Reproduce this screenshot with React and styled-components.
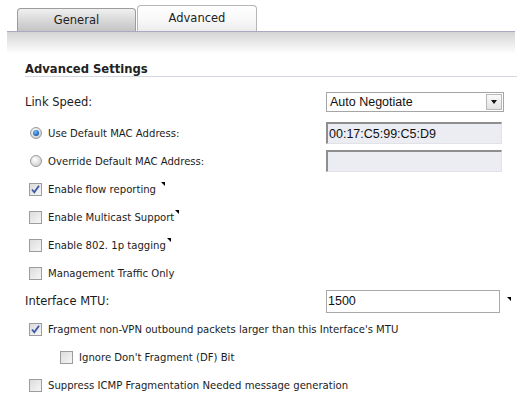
import React from "react";
import styled, { createGlobalStyle, css } from "styled-components";

const Global = createGlobalStyle`
  html, body {
    margin: 0;
    background: #fff;
    font-family: "DejaVu Sans", Verdana, sans-serif;
    color: #1c1c1c;
  }
`;

const TabStrip = styled.div`
  display: flex;
  align-items: flex-end;
  height: 31px;
  margin: 0 5px 0 7px;
  padding-left: 10px;
  border-bottom: 1px solid #a9a9c1;
`;

const Tab = styled.div`
  box-sizing: border-box;
  width: ${(p) => (p.active ? 120 : 119)}px;
  height: ${(p) => (p.active ? 26 : 23)}px;
  margin-right: 1px;
  border: 1px solid ${(p) => (p.active ? "#b6b6b6" : "#9c9c9c")};
  border-bottom: none;
  border-radius: 4px 4px 0 0;
  display: flex;
  align-items: center;
  justify-content: center;
  font-size: 11.5px;
  color: #222;
  padding-bottom: ${(p) => (p.active ? 2 : 0)}px;
  background: ${(p) =>
    p.active
      ? "linear-gradient(#ffffff, #f7f7f7 60%, #ececec)"
      : "linear-gradient(#f0f0f0, #d9d9d9 50%, #c4c4c4)"};
`;

const Band = styled.div`
  height: 22px;
  margin: 0 5px 0 7px;
  background: linear-gradient(#d5d5d5, #ececec 55%, #ffffff);
`;

const Title = styled.div`
  margin: 0 3px 0 25px;
  padding-top: 8px;
  line-height: 14px;
  font-size: 11.6px;
  font-weight: bold;
  color: #222;
  border-bottom: 1px solid #d3d7e3;
`;

const Form = styled.div`
  padding-top: 11px;
`;

const Row = styled.div`
  display: grid;
  grid-template-columns: 301px 1fr;
  align-items: center;
  height: 28px;
  padding-left: ${(p) => p.indent}px;
  margin-bottom: ${(p) => p.gap || 0}px;
`;

const Option = styled.div`
  display: flex;
  align-items: center;
  height: 28px;
  padding-left: ${(p) => p.indent}px;
`;

const FieldLabel = styled.span`
  font-size: 11.5px;
  color: #1c1c1c;
`;

const Text = styled.span`
  font-size: 10.1px;
  color: #1c1c1c;
  margin-left: ${(p) => p.gap}px;
`;

const Flag = styled.span`
  display: inline-block;
  align-self: flex-start;
  margin: 7px 0 0 ${(p) => p.gap}px;
  width: 0;
  height: 0;
  border-top: 4px solid #000;
  border-left: 4px solid transparent;
`;

const Radio = styled.span`
  box-sizing: border-box;
  width: 12px;
  height: 12px;
  border-radius: 50%;
  border: 1px solid #9a9a9a;
  background: radial-gradient(circle at 40% 35%, #ffffff, #d2d2d2 75%);
  display: flex;
  align-items: center;
  justify-content: center;
  ${(p) =>
    p.checked &&
    css`
      &::after {
        content: "";
        width: 6px;
        height: 6px;
        border-radius: 50%;
        background: radial-gradient(circle at 40% 35%, #6fc0ff, #1c5fb4 70%, #0d3c86);
      }
    `}
`;

const Box = styled.span`
  box-sizing: border-box;
  width: 13px;
  height: 13px;
  border: 1px solid #9c9c9c;
  background: linear-gradient(135deg, #dcdcdc, #f6f6f6);
  display: flex;
  align-items: center;
  justify-content: center;
`;

const Select = styled.div`
  box-sizing: border-box;
  width: 178px;
  height: 20px;
  border: 1px solid #a5a5a5;
  display: flex;
  align-items: center;
  justify-content: space-between;
  padding: 0 1px 0 3px;
  font-family: "Liberation Sans", Arial, sans-serif;
  font-size: 12.5px;
  color: #111;
`;

const ArrowBtn = styled.span`
  box-sizing: border-box;
  width: 16px;
  height: 16px;
  border: 1px solid #b8b8b8;
  background: linear-gradient(#fafafa, #e2e2e2);
  display: flex;
  align-items: center;
  justify-content: center;
  &::after {
    content: "";
    border-top: 4px solid #111;
    border-left: 3.5px solid transparent;
    border-right: 3.5px solid transparent;
  }
`;

const Input = styled.div`
  box-sizing: border-box;
  width: ${(p) => p.width}px;
  height: ${(p) => p.height}px;
  display: flex;
  align-items: center;
  padding-left: 1px;
  font-family: "Liberation Sans", Arial, sans-serif;
  font-size: 12.5px;
  color: #111;
  ${(p) =>
    p.sunken
      ? css`
          background: #ecedf3;
          border-top: 2px solid #8e8e8e;
          border-left: 2px solid #8e8e8e;
          border-right: 1px solid #e2e2e6;
          border-bottom: 1px solid #e2e2e6;
        `
      : css`
          background: #fff;
          border: 1px solid #a9a9a9;
        `}
`;

const Field = styled.div`
  display: flex;
  align-items: center;
`;

const Check = () => (
  <svg width="11" height="11" viewBox="0 0 11 11">
    <path d="M2 5.5 L4.3 8.3 L9 1.8" fill="none" stroke="#3b57a6" strokeWidth="1.8" />
  </svg>
);

const CheckRow = ({ checked, label, flag, indent = 29, flagGap = 8 }) => (
  <Option indent={indent}>
    <Box>{checked && <Check />}</Box>
    <Text gap={6}>{label}</Text>
    {flag && <Flag gap={flagGap} />}
  </Option>
);

export default function App() {
  return (
    <>
      <Global />
      <TabStrip>
        <Tab>General</Tab>
        <Tab active>Advanced</Tab>
      </TabStrip>
      <Band />
      <Title>Advanced Settings</Title>
      <Form>
        <Row indent={25} gap={3}>
          <FieldLabel>Link Speed:</FieldLabel>
          <Select>
            Auto Negotiate
            <ArrowBtn />
          </Select>
        </Row>
        <Row indent={25}>
          <Option indent={5}>
            <Radio checked />
            <Text gap={6}>Use Default MAC Address:</Text>
          </Option>
          <Input sunken width={176} height={22}>
            00:17:C5:99:C5:D9
          </Input>
        </Row>
        <Row indent={25}>
          <Option indent={5}>
            <Radio />
            <Text gap={6}>Override Default MAC Address:</Text>
          </Option>
          <Input sunken width={176} height={22} />
        </Row>
        <CheckRow checked label="Enable flow reporting" flag flagGap={5} />
        <CheckRow label="Enable Multicast Support" flag flagGap={1} />
        <CheckRow label="Enable 802. 1p tagging" flag flagGap={1} />
        <CheckRow label="Management Traffic Only" />
        <Row indent={25}>
          <FieldLabel>Interface MTU:</FieldLabel>
          <Field>
            <Input width={174} height={23}>
              1500
            </Input>
            <Flag gap={7} />
          </Field>
        </Row>
        <CheckRow checked label="Fragment non-VPN outbound packets larger than this Interface's MTU" />
        <CheckRow indent={60} label="Ignore Don't Fragment (DF) Bit" />
        <CheckRow label="Suppress ICMP Fragmentation Needed message generation" />
      </Form>
    </>
  );
}
